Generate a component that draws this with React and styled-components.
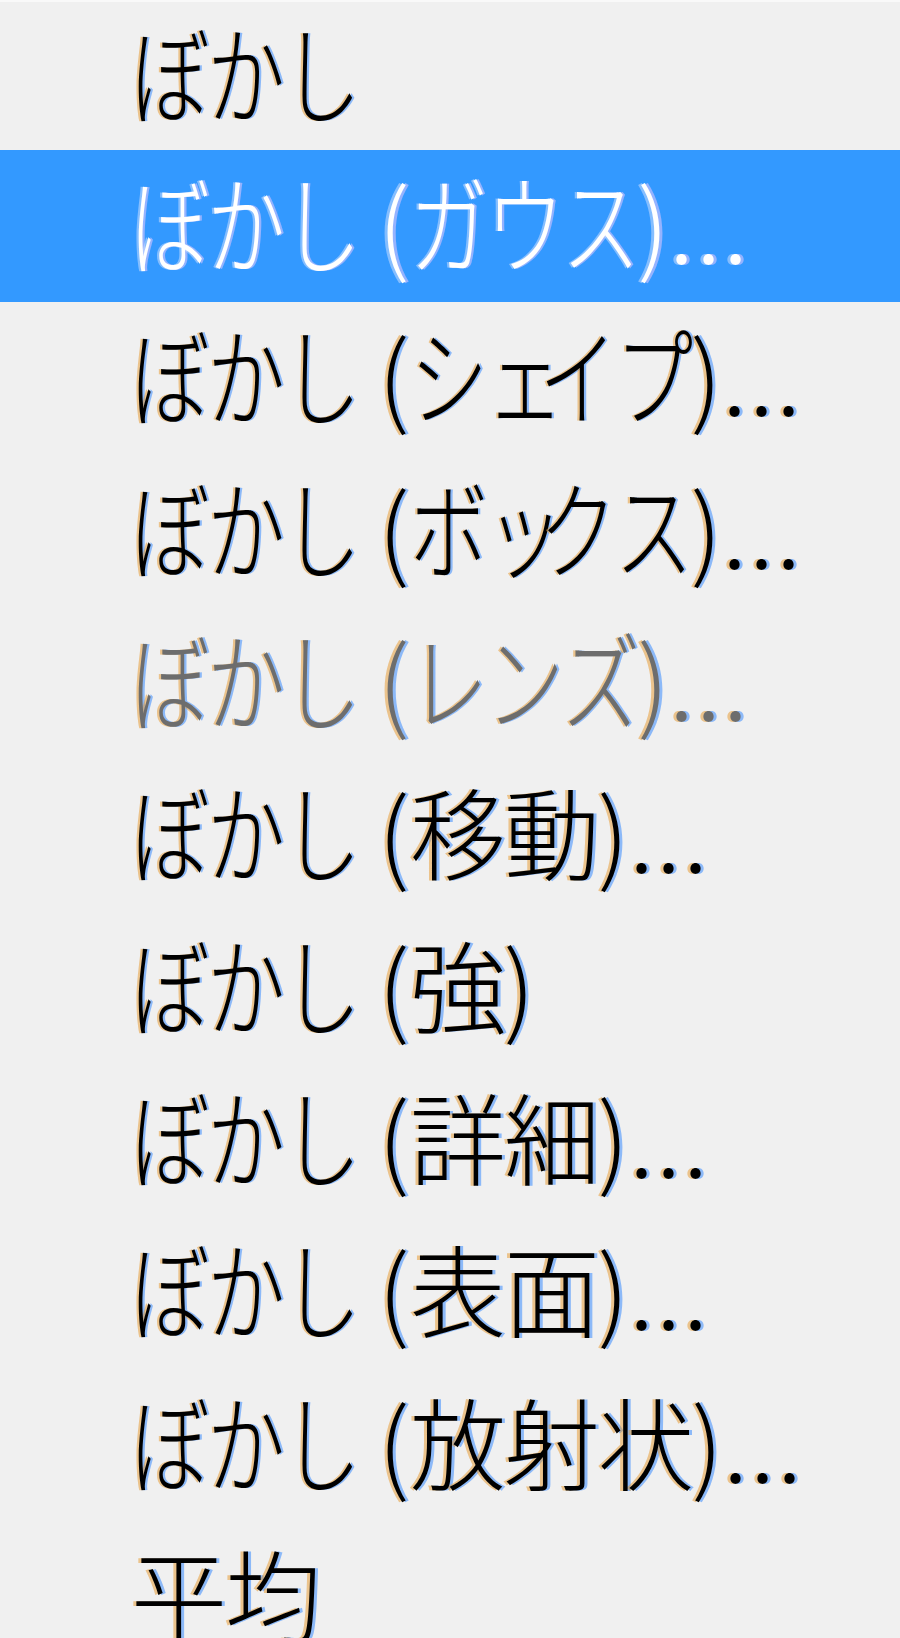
import React from 'react'
import styled, { createGlobalStyle } from 'styled-components'

const GlobalStyle = createGlobalStyle`
    html, body {
        margin: 0;
        padding: 0;
        background: #f0f0f0;
    }
    body {
        overflow: hidden;
    }
`

const Menu = styled.ul`
    list-style: none;
    margin: 0;
    padding: 0;
    width: 900px;
    border-top: 2px solid #f9f9f9;
    background: #f0f0f0;
    font-family: "Noto Sans CJK JP", "Noto Sans", sans-serif;
`

const Item = styled.li`
    display: flex;
    align-items: center;
    height: 152.3px;
    padding-left: 131px;
    box-sizing: border-box;
    background: ${p => (p.active ? '#3399ff' : 'transparent')};
    color: ${p => (p.active ? '#ffffff' : p.disabled ? '#6d6d6d' : '#000000')};

    &:first-child {
        height: 148px;
    }
`

const Label = styled.span`
    font-size: 100px;
    line-height: 1;
    font-weight: 300;
    white-space: pre;
    transform: translateY(-5px);
    text-shadow: ${p => (p.active
        ? '-3px 0 rgba(200, 220, 255, 0.55), 3px 0 rgba(230, 200, 255, 0.55)'
        : '-3px 0 rgba(230, 150, 40, 0.5), 3px 0 rgba(40, 130, 255, 0.5)')};
`

// full-width glyphs squeezed to the narrow system UI face
const Glyph = styled.span`
    display: inline-block;
    transform-origin: left 58%;
    transform: scale(${p => p.sx}, ${p => p.sy});
    margin-right: ${p => p.pull}px;
`

const Space = styled.span`
    margin-right: -3px;
`

const Dots = styled.span`
    letter-spacing: 2px;
`

const glyphFor = ch => {
    if (/[ァィゥェォッャュョ]/.test(ch)) return { sx: 0.78, sy: 1.06, pull: -47 }
    if (/[\u3040-\u30ff]/.test(ch)) return { sx: 0.78, sy: 1.07, pull: -24 }
    if (/[\u4e00-\u9fff]/.test(ch)) return { sx: 0.96, sy: 1, pull: -6 }
    return null
}

const Text = ({ children }) => (
    <>
        {[...children].map((ch, i) => {
            const g = glyphFor(ch)
            if (g) return <Glyph key={i} sx={g.sx} sy={g.sy} pull={g.pull}>{ch}</Glyph>
            if (ch === ' ') return <Space key={i}> </Space>
            if (ch === '.') return <Dots key={i}>.</Dots>
            return <span key={i}>{ch}</span>
        })}
    </>
)

const items = [
    { label: 'ぼかし' },
    { label: 'ぼかし (ガウス)...', active: true },
    { label: 'ぼかし (シェイプ)...' },
    { label: 'ぼかし (ボックス)...' },
    { label: 'ぼかし (レンズ)...', disabled: true },
    { label: 'ぼかし (移動)...' },
    { label: 'ぼかし (強)' },
    { label: 'ぼかし (詳細)...' },
    { label: 'ぼかし (表面)...' },
    { label: 'ぼかし (放射状)...' },
    { label: '平均' },
]

export default function App() {
    return (
        <>
            <GlobalStyle />
            <Menu>
                {items.map(item => (
                    <Item key={item.label} active={item.active} disabled={item.disabled}>
                        <Label active={item.active}>
                            <Text>{item.label}</Text>
                        </Label>
                    </Item>
                ))}
            </Menu>
        </>
    )
}
